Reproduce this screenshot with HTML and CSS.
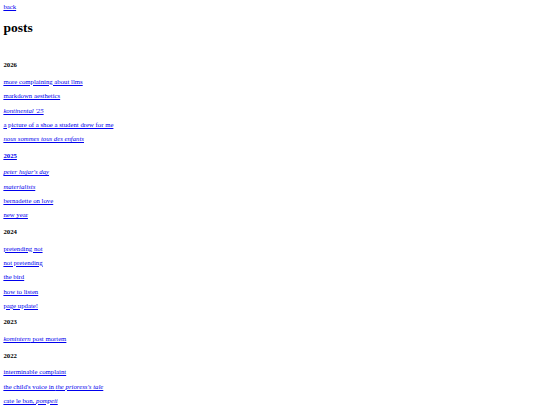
FILE: index.html
```html
<!DOCTYPE html>
<html lang="en">
<head>
<meta charset="utf-8">
<title>posts</title>
<link rel="stylesheet" href="styles.css">
</head>
<body class="page">
  <nav class="nav"><a class="link" href="#">back</a></nav>
  <h1 class="page-title">posts</h1>

  <section class="year-group">
    <h4 class="year">2026</h4>
    <p class="post"><a class="link" href="#">more complaining about llms</a></p>
    <p class="post"><a class="link" href="#">markdown aesthetics</a></p>
    <p class="post"><a class="link" href="#"><em>kontinental '25</em></a></p>
    <p class="post"><a class="link" href="#">a picture of a shoe a student drew for me</a></p>
    <p class="post"><a class="link" href="#"><em>nous sommes tous des enfants</em></a></p>
  </section>

  <section class="year-group">
    <h4 class="year"><a class="link" href="#">2025</a></h4>
    <p class="post"><a class="link" href="#"><em>peter hujar's day</em></a></p>
    <p class="post"><a class="link" href="#"><em>materialists</em></a></p>
    <p class="post"><a class="link" href="#">bernadette on love</a></p>
    <p class="post"><a class="link" href="#">new year</a></p>
  </section>

  <section class="year-group">
    <h4 class="year">2024</h4>
    <p class="post"><a class="link" href="#">pretending not</a></p>
    <p class="post"><a class="link" href="#">not pretending</a></p>
    <p class="post"><a class="link" href="#">the bird</a></p>
    <p class="post"><a class="link" href="#">how to listen</a></p>
    <p class="post"><a class="link" href="#">page update!</a></p>
  </section>

  <section class="year-group">
    <h4 class="year">2023</h4>
    <p class="post"><a class="link" href="#"><em>komintern</em> post mortem</a></p>
  </section>

  <section class="year-group">
    <h4 class="year">2022</h4>
    <p class="post"><a class="link" href="#">interminable complaint</a></p>
    <p class="post"><a class="link" href="#">the child's voice in <em>the prioress's tale</em></a></p>
    <p class="post"><a class="link" href="#">cate le bon, <em>pompeii</em></a></p>
  </section>
</body>
</html>
```

FILE: styles.css
```css
/* Plain, small-type index of posts grouped by year */
.page {
  margin: 3.375px;
  font-family: "Liberation Serif", "Times New Roman", serif;
  font-size: 6.75px;
  line-height: 7.6px;
  color: #000;
  background: #fff;
}

.link {
  color: #0000ee;
  text-decoration: underline;
}

.page-title {
  font-size: 13.5px;
  line-height: 15.5px;
  font-weight: bold;
  margin: 9.05px 0 25.8px;
}

.year {
  font-size: 6.75px;
  font-weight: bold;
  margin: 8.98px 0;
}

.post {
  margin: 6.75px 0;
}
```
